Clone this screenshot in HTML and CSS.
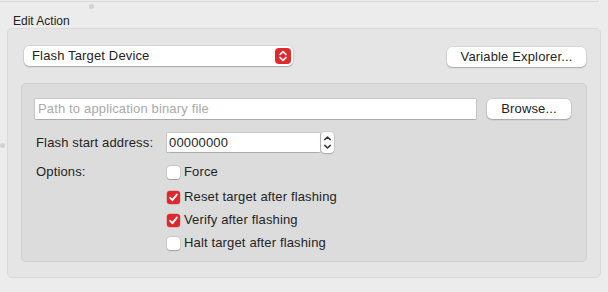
FILE: index.html
```html
<!DOCTYPE html>
<html>
<head>
<meta charset="utf-8">
<link rel="stylesheet" href="styles.css">
</head>
<body>
<div class="topbar"></div>
<span class="handle handle-top"></span>
<span class="handle handle-left"></span>
<div class="title">Edit Action</div>
<div class="outer">
  <div class="header">
    <div class="popup">
      <span class="popup-text">Flash Target Device</span>
      <span class="popup-arrows">
        <svg width="16" height="16" viewBox="0 0 16 16"><path d="M5 6.5 L8 3.6 L11 6.5 M5 9.5 L8 12.4 L11 9.5" fill="none" stroke="#fff" stroke-width="1.7" stroke-linecap="round" stroke-linejoin="round"/></svg>
      </span>
    </div>
    <div class="btn btn-var">Variable Explorer...</div>
  </div>
  <div class="inner">
    <div class="path-row">
      <div class="field path-field"><span class="placeholder">Path to application binary file</span></div>
      <div class="btn btn-browse">Browse...</div>
    </div>
    <div class="grid">
      <div class="label">Flash start address:</div>
      <div class="addr">
        <div class="field addr-field">00000000</div>
        <div class="stepper">
          <svg width="13" height="21" viewBox="0 0 13 21"><path d="M3.8 7.6 L6.5 5 L9.2 7.6 M3.8 13.4 L6.5 16 L9.2 13.4" fill="none" stroke="#333" stroke-width="1.5" stroke-linecap="round" stroke-linejoin="round"/></svg>
        </div>
      </div>
      <div class="label label-opt">Options:</div>
      <div class="options">
        <div class="opt opt-first"><span class="cb"></span><span>Force</span></div>
        <div class="opt"><span class="cb on"><svg width="13" height="13" viewBox="0 0 13 13"><path d="M3.2 6.8 L5.4 9.2 L9.8 3.6" fill="none" stroke="#fff" stroke-width="1.9" stroke-linecap="round" stroke-linejoin="round"/></svg></span><span>Reset target after flashing</span></div>
        <div class="opt"><span class="cb on"><svg width="13" height="13" viewBox="0 0 13 13"><path d="M3.2 6.8 L5.4 9.2 L9.8 3.6" fill="none" stroke="#fff" stroke-width="1.9" stroke-linecap="round" stroke-linejoin="round"/></svg></span><span>Verify after flashing</span></div>
        <div class="opt"><span class="cb"></span><span>Halt target after flashing</span></div>
      </div>
    </div>
  </div>
</div>
</body>
</html>
```
FILE: styles.css
```css
* { box-sizing: border-box; }
html, body { margin: 0; padding: 0; }
body {
  width: 608px;
  height: 292px;
  background: #ececec;
  font-family: "Liberation Sans", Arial, sans-serif;
  font-size: 13px;
  letter-spacing: 0.15px;
  color: #242424;
  position: relative;
  overflow: hidden;
}
.topbar {
  height: 2px;
  margin-right: 9px;
  border-bottom: 1px solid #d9d9d9;
  border-right: 1px solid #d9d9d9;
  border-bottom-right-radius: 3px;
}
.handle {
  position: absolute;
  width: 5px;
  height: 5px;
  border-radius: 50%;
  background: #d2d2d2;
}
.handle-top { left: 89px; top: 4px; }
.handle-left { left: 0; top: 143px; }
.title {
  font-size: 12px;
  letter-spacing: 0;
  line-height: 14px;
  padding-left: 13px;
  margin-top: 12px;
  color: #222;
}
.outer {
  margin: 0 7px;
  height: 250px;
  background: #e5e5e5;
  border: 1px solid #dadada;
  border-radius: 5px;
  padding: 17px 13px 0 13px;
}
.header {
  display: flex;
  justify-content: space-between;
  align-items: flex-start;
  padding: 0 1px 0 3px;
}
.popup {
  width: 269px;
  height: 20px;
  background: #fff;
  border-radius: 5px;
  box-shadow: 0 0 0 0.5px rgba(0,0,0,0.12), 0 1px 1.5px rgba(0,0,0,0.22);
  display: flex;
  align-items: center;
  justify-content: space-between;
  padding: 0 2px 0 8px;
}
.popup-text { line-height: 16px; }
.popup-arrows {
  width: 16px;
  height: 16px;
  border-radius: 4px;
  background: #e0282f;
  display: flex;
}
.btn {
  height: 20px;
  background: #fff;
  border-radius: 5px;
  box-shadow: 0 0 0 0.5px rgba(0,0,0,0.12), 0 1px 1.5px rgba(0,0,0,0.22);
  display: flex;
  align-items: center;
  justify-content: center;
  line-height: 16px;
}
.btn-var { width: 139px; margin-top: 1px; }
.inner {
  margin-top: 16px;
  height: 179px;
  background: #dcdcdc;
  border: 1px solid #cfcfcf;
  border-radius: 5px;
  padding: 15px 15px 0 13px;
}
.path-row {
  display: flex;
  align-items: center;
  gap: 11px;
}
.field {
  height: 20px;
  background: #fff;
  box-shadow: 0 0 0 0.5px rgba(0,0,0,0.18), 0 0.5px 1px rgba(0,0,0,0.15);
  display: flex;
  align-items: center;
  padding-left: 3px;
  line-height: 16px;
}
.path-field { width: 441px; }
.placeholder { color: #a9a9a9; }
.btn-browse { width: 84px; }
.grid {
  margin-top: 13px;
  display: grid;
  grid-template-columns: 131px 1fr;
  row-gap: 11px;
  padding-left: 1px;
}
.label {
  line-height: 16px;
  display: flex;
  align-items: center;
}
.label-opt { align-items: flex-start; }
.addr {
  display: flex;
  align-items: center;
  gap: 1px;
}
.addr-field { width: 153px; height: 19px; padding-left: 2px; }
.stepper {
  width: 13px;
  height: 21px;
  background: #fff;
  border-radius: 4px;
  box-shadow: 0 0 0 0.5px rgba(0,0,0,0.12), 0 1px 1.5px rgba(0,0,0,0.2);
  display: flex;
}
.options {
  display: flex;
  flex-direction: column;
  gap: 7px;
}
.opt {
  height: 16px;
  display: flex;
  align-items: center;
  gap: 4px;
  line-height: 16px;
}
.opt-first { margin-bottom: 2px; }
.cb {
  width: 13px;
  height: 13px;
  border-radius: 3px;
  background: #fff;
  box-shadow: 0 0 0 0.5px rgba(0,0,0,0.15), 0 0.5px 1px rgba(0,0,0,0.2);
  display: flex;
  flex: none;
}
.cb.on { background: #e1262d; box-shadow: 0 0 0 0.5px rgba(150,0,0,0.3); }
```
